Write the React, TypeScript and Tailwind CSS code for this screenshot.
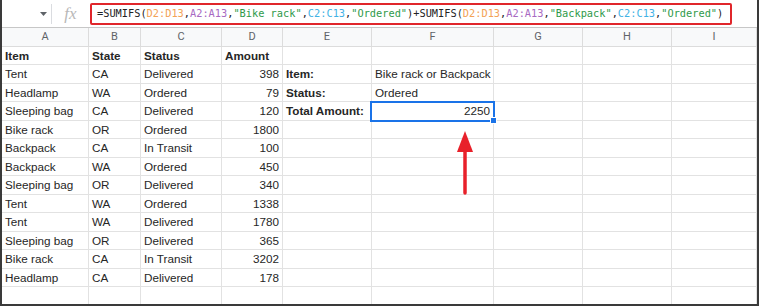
import React from "react";

const cols = ["A", "B", "C", "D", "E", "F", "G", "H", "I"];
const widths = ["w-[87px]", "w-[52px]", "w-[81px]", "w-[61px]", "w-[89px]", "w-[122px]", "w-[89px]", "w-[89px]", "w-[85px]"];
const heights = ["h-[18px]", "h-[19px]"];

type Cell = { t: string; right?: boolean; bold?: boolean };

const data: [string, string, string, string][] = [
  ["Tent", "CA", "Delivered", "398"],
  ["Headlamp", "WA", "Ordered", "79"],
  ["Sleeping bag", "CA", "Delivered", "120"],
  ["Bike rack", "OR", "Ordered", "1800"],
  ["Backpack", "CA", "In Transit", "100"],
  ["Backpack", "WA", "Ordered", "450"],
  ["Sleeping bag", "OR", "Delivered", "340"],
  ["Tent", "WA", "Ordered", "1338"],
  ["Tent", "WA", "Delivered", "1780"],
  ["Sleeping bag", "OR", "Delivered", "365"],
  ["Bike rack", "CA", "In Transit", "3202"],
  ["Headlamp", "CA", "Delivered", "178"],
];

const side: Record<number, [Cell, Cell]> = {
  1: [{ t: "Item:", bold: true }, { t: "Bike rack or Backpack" }],
  2: [{ t: "Status:", bold: true }, { t: "Ordered" }],
  3: [{ t: "Total Amount:", bold: true }, { t: "2250", right: true }],
};

function buildRows(): Cell[][] {
  const rows: Cell[][] = [];
  rows.push([
    { t: "Item", bold: true },
    { t: "State", bold: true },
    { t: "Status", bold: true },
    { t: "Amount", bold: true },
  ]);
  data.forEach((d, i) => {
    const r: Cell[] = [{ t: d[0] }, { t: d[1] }, { t: d[2] }, { t: d[3], right: true }];
    const s = side[i + 1];
    if (s) r.push(s[0], s[1]);
    rows.push(r);
  });
  rows.push([]);
  return rows;
}

const Formula = () => (
  <span className="whitespace-pre text-[#222]">
    =SUMIFS(<span className="text-[#f3a256]">D2:D13</span>,<span className="text-[#a869c2]">A2:A13</span>,
    <span className="text-[#2e9a4a]">"Bike rack"</span>,<span className="text-[#3fb2e5]">C2:C13</span>,
    <span className="text-[#2e9a4a]">"Ordered"</span>)+SUMIFS(<span className="text-[#f3a256]">D2:D13</span>,
    <span className="text-[#a869c2]">A2:A13</span>,<span className="text-[#2e9a4a]">"Backpack"</span>,
    <span className="text-[#3fb2e5]">C2:C13</span>,<span className="text-[#2e9a4a]">"Ordered"</span>)
  </span>
);

export default function App() {
  const rows = buildRows();
  return (
    <div className="w-[759px] h-[308px] bg-white overflow-hidden">
      <div className="relative w-[759px] h-[306px] border-l-2 border-r-2 border-b-2 border-[#3a3a3a] overflow-hidden font-['Liberation_Sans',Arial,sans-serif]">
        {/* formula bar */}
        <div className="flex items-center h-[28px] border-b border-[#c7c7c7]">
          <div className="w-[49px] h-full flex items-center justify-end pr-[4px]">
            <svg width="7" height="4" viewBox="0 0 7 4">
              <path d="M0 0h7L3.5 4z" fill="#5f6368" />
            </svg>
          </div>
          <div className="w-px h-[20px] bg-[#dadce0]" />
          <div className="w-[37px] flex items-center justify-center font-['Liberation_Serif',serif] italic text-[17px] text-[#b8b8b8]">
            fx
          </div>
          <div className="flex items-center w-[642px] h-[22px] ml-[1px] border-2 border-[#e0262b] rounded-[2px] pl-[5px] font-['DejaVu_Sans_Mono',monospace] text-[10.3px]">
            <Formula />
          </div>
        </div>
        {/* column headers */}
        <div className="flex h-[19px] bg-[#f8f9fa]">
          {cols.map((c, i) => (
            <div
              key={c}
              className={`${widths[i]} shrink-0 h-full border-r border-b border-[#dcdcdc] flex items-center justify-center text-[11px] text-[#5f6368] font-['Roboto',sans-serif]`}
            >
              {c}
            </div>
          ))}
        </div>
        {/* grid */}
        {rows.map((r, ri) => (
          <div key={ri} className={`flex ${heights[ri % 2]}`}>
            {cols.map((c, ci) => {
              const cell = r[ci];
              return (
                <div
                  key={c}
                  className={`${widths[ci]} shrink-0 h-full border-r border-b border-[#e2e2e2] flex items-center px-[3px] text-[11.7px] text-[#262626] whitespace-nowrap ${
                    cell?.right ? "justify-end" : ""
                  } ${cell?.bold ? "font-bold" : ""}`}
                >
                  {cell?.t}
                </div>
              );
            })}
          </div>
        ))}
        {/* selection */}
        <div className="absolute left-[368px] top-[101px] w-[125px] h-[21px] border-2 border-[#1a73e8] pointer-events-none" />
        <div className="absolute left-[488px] top-[117px] w-[7px] h-[7px] bg-[#1a73e8] border border-white" />
        {/* arrow */}
        <svg className="absolute left-[448px] top-[125px]" width="30" height="75" viewBox="0 0 30 75">
          <polygon points="15,6 7,27 23,27" fill="#e8202a" />
          <line x1="15" y1="24" x2="15" y2="68" stroke="#e8202a" strokeWidth="3.5" strokeLinecap="round" />
        </svg>
      </div>
    </div>
  );
}
